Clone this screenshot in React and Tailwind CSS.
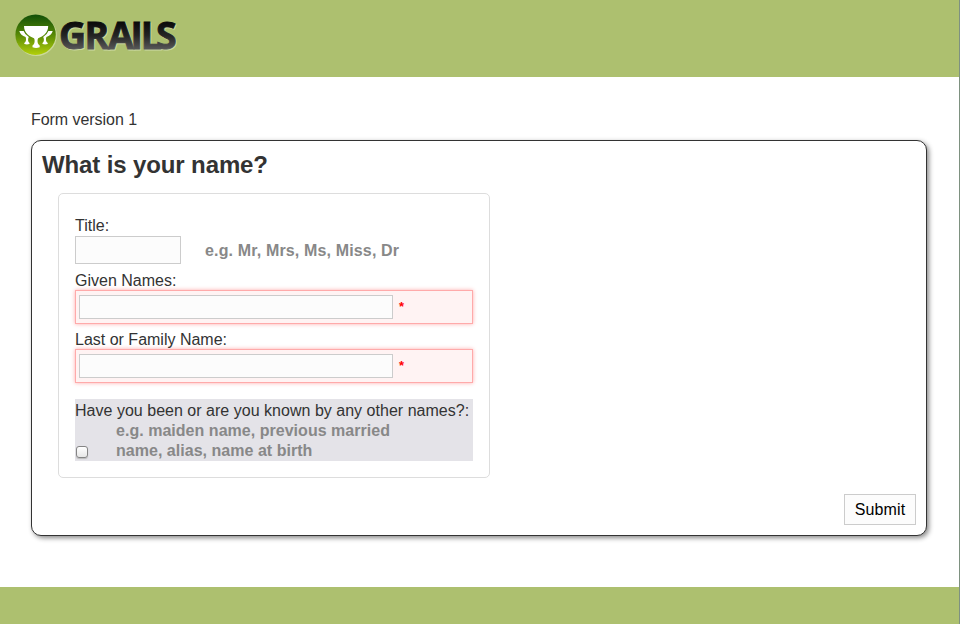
import React from 'react';

function Logo() {
  return (
    <svg className="overflow-visible" width="240" height="77" viewBox="0 0 240 77" role="img" aria-label="Grails">
      <defs>
        <linearGradient id="disc" x1="0" y1="0" x2="0" y2="1">
          <stop offset="0" stopColor="#124f08" />
          <stop offset="0.45" stopColor="#4e8206" />
          <stop offset="1" stopColor="#b2cf0b" />
        </linearGradient>
        <linearGradient id="word" gradientUnits="userSpaceOnUse" x1="0" y1="21" x2="0" y2="50">
          <stop offset="0" stopColor="#080808" />
          <stop offset="0.5" stopColor="#242424" />
          <stop offset="1" stopColor="#5a5a5a" />
        </linearGradient>
      </defs>
      <circle cx="36.4" cy="35.6" r="20.4" fill="#cbd99b" />
      <circle cx="35.6" cy="34.7" r="20.2" fill="url(#disc)" />
      <g fill="#fff">
        <path d="M24 26h24.2c0 3.600-1.300 6.300-3.700 8.400-2 1.700-4.200 2.800-6.300 3.800-1 1.300-.8 4.600.2 6l1.300 1.400v1.700q-3.600 1.200-7.200 0v-1.700l1.300-1.400c1-1.400 1.200-4.700.2-6-2.100-1-4.300-2.100-6.300-3.800-2.400-2.100-3.700-4.800-3.700-8.400z" />
        <path d="M19.300 31h4.300q1.200 3.500 5.200 6c-.9 1.800-.9 3.800-.2 5.100l.9 1v1q-2.600.7-5.200 0v-1l1-1c.9-1.500.9-3.400.3-5.100-3.300-.9-5.600-2.900-6.300-6z" />
        <path d="M52.700 31h-4.300q-1.200 3.500-5.200 6c.9 1.800.9 3.800.2 5.100l-.9 1v1q2.600.7 5.200 0v-1l-1-1c-.9-1.500-.9-3.400-.3-5.100 3.300-.9 5.600-2.900 6.300-6z" />
      </g>
      <g fontFamily="'Open Sans', 'Noto Sans', sans-serif" fontWeight="700" fontSize="37.500">
        <text x="60 85.500 109 131.500 141.700 157" y="50" fill="#cbd8a2" stroke="#cbd8a2" strokeWidth="0.900">GRAILS</text>
        <text x="59 84.500 108 130.500 140.700 156" y="49" fill="url(#word)" stroke="url(#word)" strokeWidth="0.900">GRAILS</text>
      </g>
    </svg>
  );
}

function RequiredField({ label, id }) {
  return (
    <div>
      <label htmlFor={id} className="block h-5 leading-[22px]">{label}</label>
      <div className="flex h-[34px] w-[398px] items-center border border-[#ffaaaa] bg-[#fff3f3] pl-[3px] shadow-[0_0_4px_#ffaaaa]">
        <input id={id} className="h-6 w-[314px] border border-[#cccccc] bg-[#fcfcfc] px-1 outline-none" />
        <span className="ml-[6px] text-[13px] leading-4 font-bold text-[#ff0000]">*</span>
      </div>
    </div>
  );
}

export default function App() {
  return (
    <div className="flex h-[624px] w-[960px] flex-col overflow-hidden border-r border-[#7e9180] bg-white font-['Liberation_Sans',Arial,sans-serif] text-base text-[#333333]">
      <header className="h-[77px] shrink-0 bg-[#adc06f]">
        <Logo />
      </header>
      <main className="h-[510px] shrink-0 pt-8 pl-[31px]">
        <p className="h-[31px] leading-[22px] tracking-[-0.05px]">Form version 1</p>
        <form className="flex h-[396px] w-[896px] flex-col rounded-[10px] border border-[#333333] bg-white p-[10px] shadow-[2px_2px_5px_#888888]" onSubmit={(e) => e.preventDefault()}>
          <h1 className="h-[42px] text-2xl leading-[28px] font-bold tracking-[-0.12px]">What is your name?</h1>
          <div className="ml-4 h-[285px] w-[432px] rounded-[5px] border border-[#dddddd] pt-[22px] pl-4">
            <label htmlFor="title" className="block h-5 leading-5">Title:</label>
            <div className="flex h-[34px] items-start">
              <input id="title" className="h-7 w-[106px] border border-[#cccccc] bg-[#fcfcfc] px-1 outline-none" />
              <span className="ml-6 leading-[29px] font-bold tracking-[0.15px] text-[#888888]">e.g. Mr, Mrs, Ms, Miss, Dr</span>
            </div>
            <RequiredField id="given" label="Given Names:" />
            <div className="mt-[5px]">
              <RequiredField id="family" label="Last or Family Name:" />
            </div>
            <div className="mt-4 h-[62px] w-[398px] bg-[#e4e3e8] pt-[2px]">
              <label htmlFor="other" className="block leading-5 tracking-[0.02px] whitespace-nowrap">Have you been or are you known by any other names?:</label>
              <div className="flex items-end">
                <input id="other" type="checkbox" className="mb-[3px] ml-px size-3 shrink-0 appearance-none rounded-[3px] border border-[#858585] bg-linear-to-b from-white to-[#e7e7e7] shadow-[0_1px_1px_#bbbbbb]" />
                <div className="ml-7 leading-5 font-bold tracking-[0.03px] whitespace-nowrap text-[#888888]">
                  e.g. maiden name, previous married<br />name, alias, name at birth
                </div>
              </div>
            </div>
          </div>
          <button type="submit" className="mt-4 h-[31px] w-[72px] self-end border border-[#cccccc] bg-[#fcfcfc] tracking-[0.1px] text-black">Submit</button>
        </form>
      </main>
      <footer className="h-[37px] shrink-0 bg-[#adc06f]" />
    </div>
  );
}
